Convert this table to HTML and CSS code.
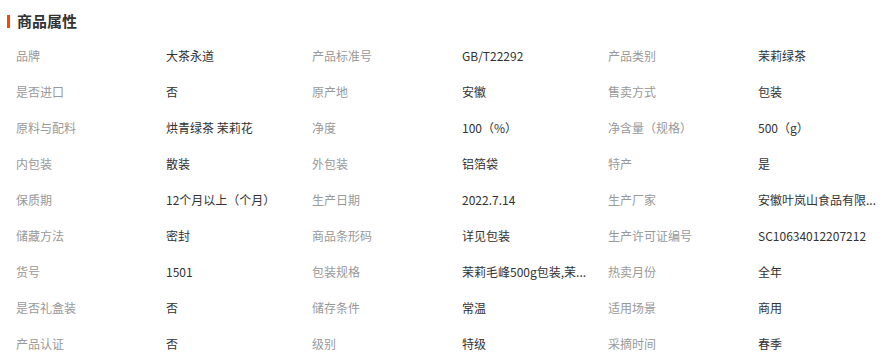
FILE: index.html
```html
<!DOCTYPE html>
<html lang="zh-CN">
<head>
<meta charset="utf-8">
<title>商品属性</title>
<link rel="stylesheet" href="styles.css">
</head>
<body>
<div class="panel">
  <div class="panel-head"><span class="bar"></span><h2 class="title">商品属性</h2></div>
  <div class="attrs">
    <div class="k">品牌</div><div class="v">大茶永道</div>
    <div class="k">产品标准号</div><div class="v">GB/T22292</div>
    <div class="k">产品类别</div><div class="v">茉莉绿茶</div>

    <div class="k">是否进口</div><div class="v">否</div>
    <div class="k">原产地</div><div class="v">安徽</div>
    <div class="k">售卖方式</div><div class="v">包装</div>

    <div class="k">原料与配料</div><div class="v">烘青绿茶 茉莉花</div>
    <div class="k">净度</div><div class="v">100（%）</div>
    <div class="k">净含量（规格）</div><div class="v">500（g）</div>

    <div class="k">内包装</div><div class="v">散装</div>
    <div class="k">外包装</div><div class="v">铝箔袋</div>
    <div class="k">特产</div><div class="v">是</div>

    <div class="k">保质期</div><div class="v">12个月以上（个月）</div>
    <div class="k">生产日期</div><div class="v">2022.7.14</div>
    <div class="k">生产厂家</div><div class="v">安徽叶岚山食品有限...</div>

    <div class="k">储藏方法</div><div class="v">密封</div>
    <div class="k">商品条形码</div><div class="v">详见包装</div>
    <div class="k">生产许可证编号</div><div class="v">SC10634012207212</div>

    <div class="k">货号</div><div class="v">1501</div>
    <div class="k">包装规格</div><div class="v">茉莉毛峰500g包装,茉...</div>
    <div class="k">热卖月份</div><div class="v">全年</div>

    <div class="k">是否礼盒装</div><div class="v">否</div>
    <div class="k">储存条件</div><div class="v">常温</div>
    <div class="k">适用场景</div><div class="v">商用</div>

    <div class="k">产品认证</div><div class="v">否</div>
    <div class="k">级别</div><div class="v">特级</div>
    <div class="k">采摘时间</div><div class="v">春季</div>
  </div>
</div>
</body>
</html>
```

FILE: styles.css
```css
html, body {
  margin: 0;
  padding: 0;
  background: #fff;
}
body {
  font-family: "Noto Sans CJK SC", "Noto Sans", "Liberation Sans", sans-serif;
  font-size: 12px;
  color: #333;
}
.panel {
  width: 896px;
}
.panel-head {
  display: flex;
  align-items: center;
  height: 38px;
  box-sizing: border-box;
  padding: 11px 0 7px 7px;
}
.bar {
  width: 3px;
  height: 13px;
  background: #ff4400;
  margin-right: 7px;
}
.title {
  margin: 0;
  font-size: 15px;
  font-weight: bold;
  line-height: 20px;
  color: #333;
}
.attrs {
  display: grid;
  grid-template-columns: repeat(3, 150px 146px);
  grid-auto-rows: 36px;
  margin-left: 8px;
}
.k, .v {
  line-height: 36px;
  padding-left: 8px;
  white-space: nowrap;
}
.k {
  color: #999;
  padding-right: 8px;
}
.v {
  color: #333;
  padding-right: 8px;
}
```
